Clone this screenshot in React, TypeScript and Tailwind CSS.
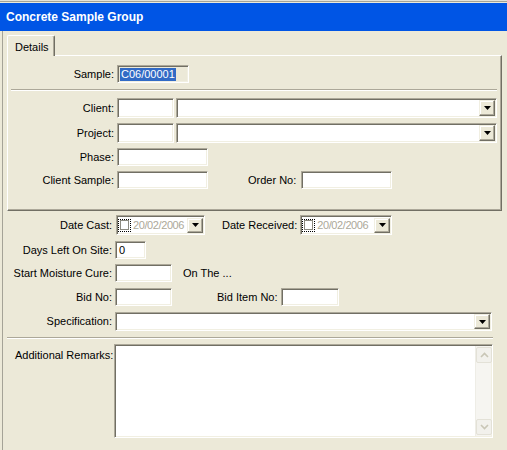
import React from 'react';

// XP-style sunken field
const Field = ({ className = '', children }: { className?: string; children?: React.ReactNode }) => (
  <div
    className={`box-border border border-t-[#aca899] border-l-[#aca899] border-b-white border-r-white shadow-[inset_1px_1px_0_#716f64,inset_-1px_-1px_0_#f1efe2] flex items-center ${className}`}
  >
    {children}
  </div>
);

const Arrow = () => (
  <svg width="7" height="4" viewBox="0 0 7 4" className="block">
    <path d="M0 0h7L3.5 4z" fill="#000" />
  </svg>
);

const DropBtn = ({ className = '' }: { className?: string }) => (
  <div
    className={`box-border w-[16px] shrink-0 bg-[#ece9d8] border border-t-[#f1efe2] border-l-[#f1efe2] border-b-[#716f64] border-r-[#716f64] shadow-[inset_-1px_-1px_0_#aca899,inset_1px_1px_0_#ffffff] flex items-center justify-center ${className}`}
  >
    <Arrow />
  </div>
);

const ComboField = ({ className = '' }: { className?: string }) => (
  <Field className={`bg-white justify-end p-[1px] ${className}`}>
    <DropBtn className="h-full" />
  </Field>
);

const DatePicker = ({ className = '' }: { className?: string }) => (
  <Field className={`bg-white pl-[1px] pr-[1px] py-[1px] ${className}`}>
    <div className="w-[13px] h-[13px] border border-dotted border-black flex items-center justify-center shrink-0">
      <div className="w-[9px] h-[10px] bg-white border border-[#8c8a80]" />
    </div>
    <span className="ml-[2px] text-[#aca899] flex-1 whitespace-nowrap tracking-[-0.4px]">20/02/2006</span>
    <DropBtn className="h-[15px]" />
  </Field>
);

const Chevron = ({ up }: { up?: boolean }) => (
  <svg width="9" height="6" viewBox="0 0 9 6" className="block">
    <path
      d={up ? 'M1 5l3.5-3.5L8 5' : 'M1 1l3.5 3.5L8 1'}
      stroke="#c9c6b6"
      strokeWidth="1.6"
      fill="none"
    />
  </svg>
);

const ScrollBtn = ({ up }: { up?: boolean }) => (
  <div className="w-[16px] h-[16px] rounded-[2px] border border-[#e3e1d7] bg-[#f2f1ec] flex items-center justify-center">
    <Chevron up={up} />
  </div>
);

export default function App() {
  return (
    <div className="w-[507px] h-[450px] bg-[#ece9d8] overflow-hidden font-['Liberation_Sans',Arial,sans-serif] text-[11px] leading-none text-black">
      {/* window top edge */}
      <div className="h-[1px] bg-[#e4e2d8]" />
      <div className="h-[1px] bg-[#a5a397]" />
      <div className="h-[1px] bg-[#ece9d8]" />
      {/* title bar */}
      <div className="h-[28px] bg-[#0055e5] flex items-center pl-[6px] text-white font-bold text-[12px]">
        Concrete Sample Group
      </div>

      <div className="h-[419px] ml-[2px] border-l border-[#a5a397] flex flex-col">
        {/* tab */}
        <div className="pt-[4px] pl-[4px]">
          <div className="relative z-10 -mb-[1px] w-[48px] h-[21px] bg-[#ece9d8] border-t border-l border-white border-r border-r-[#716f64] shadow-[inset_-1px_0_0_#aca899] rounded-t-[2px] pl-[7px] pt-[6px]">
            Details
          </div>
        </div>

        {/* panel */}
        <div className="ml-[4px] w-[495px] h-[156px] box-border border-t border-l border-white border-r border-b border-r-[#716f64] border-b-[#716f64] shadow-[inset_-1px_-1px_0_#aca899] flex flex-col">
          <div className="mt-[9px] h-[18px] flex items-center">
            <div className="w-[106px] text-right">Sample:</div>
            <Field className="ml-[3px] w-[72px] h-[18px] bg-[#ece9d8] pl-[2px]">
              <span className="bg-[#316ac5] text-white px-[1px] py-[1px]">C06/00001</span>
            </Field>
          </div>

          <div className="mt-[6px] ml-[3px] w-[486px] border-t border-t-[#aca899] border-b border-b-white" />

          <div className="mt-[7px] h-[20px] flex items-center">
            <div className="w-[106px] text-right">Client:</div>
            <Field className="ml-[3px] w-[57px] h-[20px] bg-white" />
            <ComboField className="ml-[2px] w-[321px] h-[20px]" />
          </div>

          <div className="mt-[5px] h-[20px] flex items-center">
            <div className="w-[106px] text-right">Project:</div>
            <Field className="ml-[3px] w-[57px] h-[20px] bg-white" />
            <ComboField className="ml-[2px] w-[321px] h-[20px]" />
          </div>

          <div className="mt-[5px] h-[18px] flex items-center">
            <div className="w-[106px] text-right">Phase:</div>
            <Field className="ml-[3px] w-[91px] h-[18px] bg-white" />
          </div>

          <div className="mt-[5px] h-[18px] flex items-center">
            <div className="w-[106px] text-right">Client Sample:</div>
            <Field className="ml-[3px] w-[91px] h-[18px] bg-white" />
            <div className="ml-[40px] w-[50px]">Order No:</div>
            <Field className="ml-[3px] w-[91px] h-[18px] bg-white" />
          </div>
        </div>

        {/* lower form */}
        <div className="mt-[4px] h-[20px] flex items-center">
          <div className="w-[109px] text-right">Date Cast:</div>
          <DatePicker className="ml-[4px] w-[89px] h-[20px]" />
          <div className="ml-[17px]">Date Received:</div>
          <DatePicker className="ml-[3px] w-[92px] h-[20px]" />
        </div>

        <div className="mt-[6px] h-[18px] flex items-center">
          <div className="w-[109px] text-right">Days Left On Site:</div>
          <Field className="ml-[3px] w-[31px] h-[18px] bg-white pl-[3px]">0</Field>
        </div>

        <div className="mt-[5px] h-[18px] flex items-center">
          <div className="w-[109px] text-right">Start Moisture Cure:</div>
          <Field className="ml-[3px] w-[57px] h-[18px] bg-white" />
          <div className="ml-[11px]">On The ...</div>
        </div>

        <div className="mt-[6px] h-[18px] flex items-center">
          <div className="w-[109px] text-right">Bid No:</div>
          <Field className="ml-[3px] w-[57px] h-[18px] bg-white" />
          <div className="ml-[45px]">Bid Item No:</div>
          <Field className="ml-[3px] w-[58px] h-[18px] bg-white" />
        </div>

        <div className="mt-[6px] h-[19px] flex items-center">
          <div className="w-[109px] text-right">Specification:</div>
          <ComboField className="ml-[3px] w-[377px] h-[19px]" />
        </div>

        <div className="mt-[6px] ml-[4px] w-[486px] border-t border-t-[#aca899] border-b border-b-white" />

        <div className="mt-[5px] flex">
          <div className="w-[111px] pl-[12px] pt-[6px]">Additional Remarks:</div>
          <Field className="w-[379px] h-[94px] bg-white justify-end items-stretch p-[1px]">
            <div className="w-[16px] h-full bg-[#f6f5f1] border-l border-[#eeede6] flex flex-col justify-between py-[1px]">
              <ScrollBtn up />
              <ScrollBtn />
            </div>
          </Field>
        </div>
      </div>
    </div>
  );
}
